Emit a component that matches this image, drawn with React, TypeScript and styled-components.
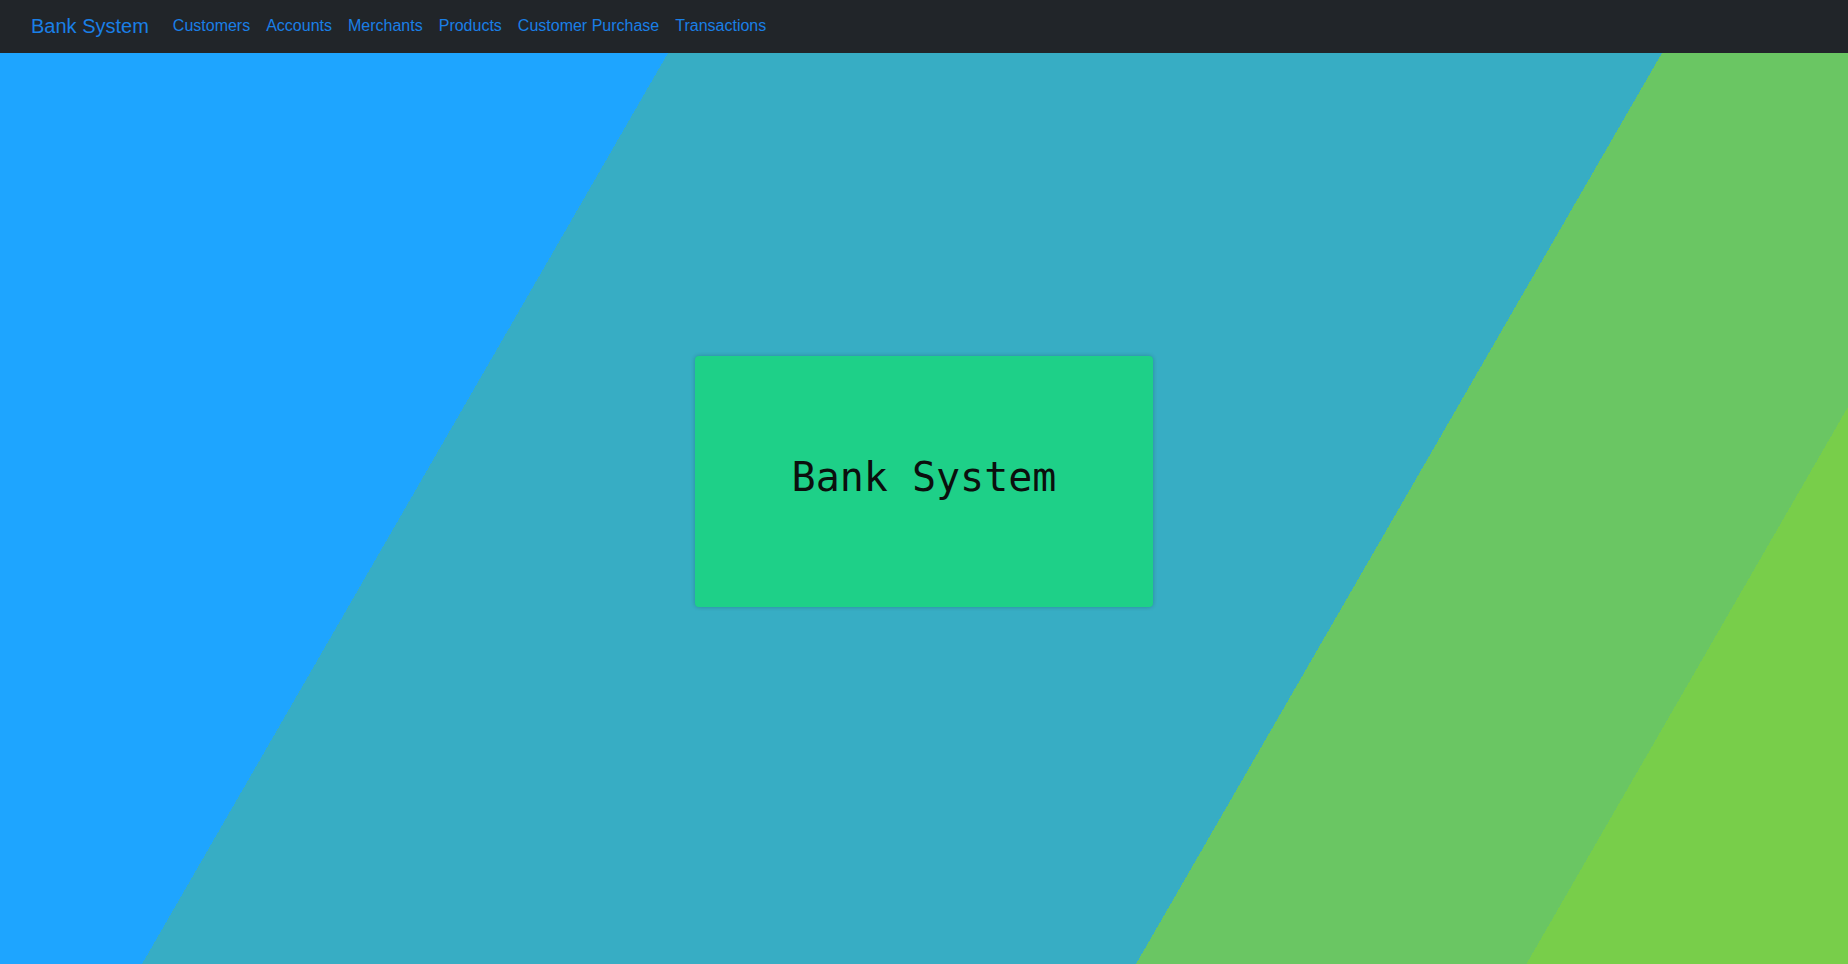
import React from "react";
import styled, { createGlobalStyle } from "styled-components";

const GlobalStyle = createGlobalStyle`
  html, body {
    margin: 0;
    padding: 0;
  }

  body {
    font-family: "Liberation Sans", Arial, sans-serif;
    background-color: #212529;
  }

  * {
    box-sizing: border-box;
  }
`;

const Navbar = styled.nav`
  display: flex;
  flex-direction: row;
  align-items: center;
  height: 53px;
  padding: 0 12px 2px 31px;
  background-color: #212529;
`;

const Brand = styled.a`
  margin-right: 16px;
  font-size: 20px;
  line-height: 30px;
  color: #1a7fe6;
  text-decoration: none;
  white-space: nowrap;
  cursor: pointer;
`;

const NavList = styled.ul`
  display: flex;
  flex-direction: row;
  list-style: none;
  margin: 0;
  padding: 0;
`;

const NavLink = styled.a`
  display: block;
  padding: 0 8px;
  font-size: 16px;
  line-height: 24px;
  color: #1a7fe6;
  text-decoration: none;
  white-space: nowrap;
  cursor: pointer;
`;

const Main = styled.main`
  display: flex;
  flex-direction: column;
  align-items: center;
  justify-content: center;
  height: calc(100vh - 53px);
  padding-bottom: 55px;
  background: linear-gradient(
    120deg,
    #1ea5ff 0,
    #1ea5ff 578.5px,
    #37adc4 578.5px,
    #37adc4 1439.3px,
    #6ac663 1439.3px,
    #6ac663 1777.4px,
    #78ce4a 1777.4px,
    #78ce4a 100%
  );
  overflow: hidden;
`;

const Card = styled.section`
  display: flex;
  align-items: center;
  justify-content: center;
  width: 458px;
  height: 251px;
  border-radius: 4px;
  background-color: #1ed088;
  box-shadow: 0 0 4px rgba(0, 0, 0, 0.22);
`;

const Title = styled.h1`
  margin: 0 0 8px;
  font-family: "DejaVu Sans Mono", "Liberation Mono", monospace;
  font-size: 40px;
  font-weight: 400;
  line-height: 1.2;
  color: #0b0f0d;
`;

const links = [
  "Customers",
  "Accounts",
  "Merchants",
  "Products",
  "Customer Purchase",
  "Transactions",
];

export default function App() {
  return (
    <>
      <GlobalStyle />
      <Navbar>
        <Brand>Bank System</Brand>
        <NavList>
          {links.map((label) => (
            <li key={label}>
              <NavLink>{label}</NavLink>
            </li>
          ))}
        </NavList>
      </Navbar>
      <Main>
        <Card>
          <Title>Bank System</Title>
        </Card>
      </Main>
    </>
  );
}
